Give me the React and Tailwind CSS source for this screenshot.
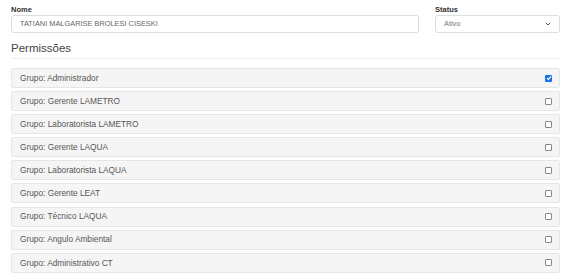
import React from 'react';

const grupos = [
  { nome: 'Administrador', ativo: true },
  { nome: 'Gerente LAMETRO' },
  { nome: 'Laboratorista LAMETRO' },
  { nome: 'Gerente LAQUA' },
  { nome: 'Laboratorista LAQUA' },
  { nome: 'Gerente LEAT' },
  { nome: 'Técnico LAQUA' },
  { nome: 'Angulo Ambiental' },
  { nome: 'Administrativo CT' },
];

const Check = ({ on }) =>
  on ? (
    <span className="w-[7px] h-[7px] rounded-[1px] bg-[#1a73e8] flex items-center justify-center">
      <svg width="6" height="6" viewBox="0 0 6 6">
        <path d="M1 3.2 L2.4 4.5 L5 1.5" fill="none" stroke="#fff" strokeWidth="1.2" />
      </svg>
    </span>
  ) : (
    <span className="w-[7px] h-[7px] rounded-[1px] border border-[#888] bg-white" />
  );

export default function App() {
  return (
    <div className="w-[567px] h-[276px] bg-white pl-[11px] pr-[7px] pt-[5px] font-['Liberation_Sans',Arial,sans-serif] overflow-hidden">
      <div className="flex gap-[16px]">
        <div className="w-[408px]">
          <div className="text-[7.5px] font-bold text-[#333] leading-[10px]">Nome</div>
          <div className="h-[18px] border border-[#ddd] rounded-[3px] flex items-center px-[8px] text-[7.4px] text-[#666]">
            TATIANI MALGARISE BROLESI CISESKI
          </div>
        </div>
        <div className="w-[125px]">
          <div className="text-[7.5px] font-bold text-[#333] leading-[10px]">Status</div>
          <div className="h-[18px] border border-[#ddd] rounded-[3px] flex items-center justify-between px-[8px] text-[7.4px] text-[#777]">
            <span>Ativo</span>
            <svg width="6" height="4" viewBox="0 0 6 4">
              <path d="M0.8 0.8 L3 3 L5.2 0.8" fill="none" stroke="#555" strokeWidth="1" />
            </svg>
          </div>
        </div>
      </div>
      <div className="mt-[8px] text-[11.5px] text-[#444] leading-[14px] pb-[3px] border-b border-[#eee]">Permissões</div>
      <div className="mt-[9px] flex flex-col gap-[3.1px]">
        {grupos.map((g, i) => (
          <div
            key={i}
            className="h-[20px] bg-[#f5f5f5] border border-[#e6e6e6] rounded-[2px] flex items-center justify-between pl-[8px] pr-[7px] text-[8.3px] text-[#555]"
          >
            <span>Grupo: {g.nome}</span>
            <Check on={g.ativo} />
          </div>
        ))}
      </div>
    </div>
  );
}
